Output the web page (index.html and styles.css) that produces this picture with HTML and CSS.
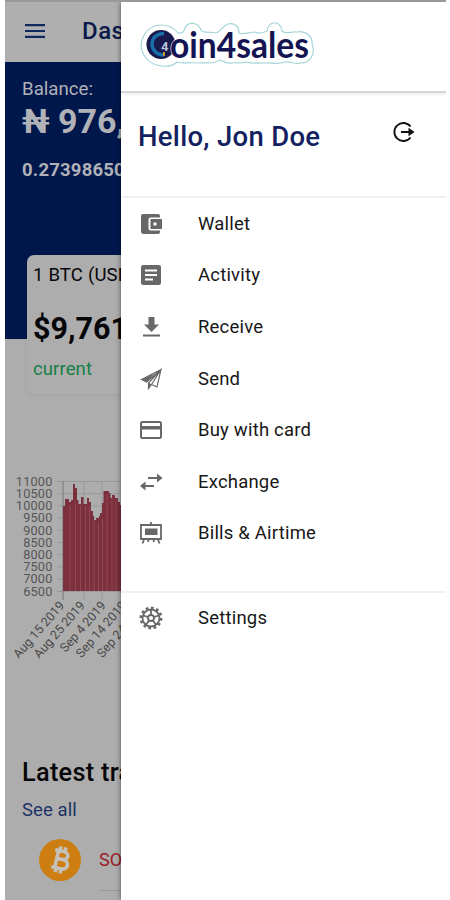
FILE: index.html
```
<!DOCTYPE html>
<html lang="en">
<head>
<meta charset="utf-8">
<title>Coin4sales</title>
<link rel="stylesheet" href="styles.css">
</head>
<body>
<div class="phone">
  <main class="dashboard">
    <header class="topbar">
      <svg class="burger" viewBox="0 0 20 14"><path d="M0 1.1h20M0 7h20M0 12.9h20"/></svg>
      <h1>Dashboard</h1>
    </header>
    <section class="hero">
      <p class="label">Balance:</p>
      <p class="amount">₦ 976,</p>
      <p class="btc">0.27398650</p>
    </section>
    <section class="rate">
      <p class="pair">1 BTC (USD)</p>
      <p class="price">$9,761</p>
      <p class="now">current</p>
    </section>
    <svg class="chart" viewBox="0 0 130 210">
      <path class="grid" d="M52 11.5h78M52 23.7h78M52 35.9h78M52 48.1h78M52 60.3h78M52 72.5h78M52 84.7h78M52 96.9h78M52 109.1h78M52 121.5h78M79 11v119M97 11v119M117 11v119"/>
      <path class="axis" d="M58 11v119"/>
      <path class="bars" d="M58 121V36H60V29H64V32H66V30H68V14H70V18H72V30H73.500V34H76V27H78.500V34H82V28H84V32H86V41H88V46H89V50H91V48H94V46H95V43H97V33H98.500V21H104V23H105.500V28H107V25H110V28H113V32H115V35H118V121Z"/>
      <path class="gaps" d="M65 35v86M70.500 32v89M75.500 35v86M80.500 36v85M84.500 36v85M89 50v71M93.500 53v68M97.500 48v73M102 24v97M107 29v92M111 29v92"/>
      <g class="ylab">
        <text x="47.500" y="15.700">11000</text><text x="47.500" y="27.900">10500</text>
        <text x="47.500" y="40.100">10000</text><text x="47.500" y="52.300">9500</text>
        <text x="47.500" y="64.500">9000</text><text x="47.500" y="76.700">8500</text>
        <text x="47.500" y="88.900">8000</text><text x="47.500" y="101.100">7500</text>
        <text x="47.500" y="113.300">7000</text><text x="47.500" y="125.500">6500</text>
      </g>
      <g class="xlab">
        <text transform="translate(60 136) rotate(-49)">Aug 15 2019</text>
        <text transform="translate(80.500 136) rotate(-49)">Aug 25 2019</text>
        <text transform="translate(101.500 136) rotate(-49)">Sep 4 2019</text>
        <text transform="translate(122 136) rotate(-49)">Sep 14 2019</text>
        <text transform="translate(143 136) rotate(-49)">Sep 24 2019</text>
      </g>
    </svg>
    <section class="latest">
      <h2>Latest transactions</h2>
      <a class="all">See all</a>
      <div class="tx">
        <svg class="coin" viewBox="0 0 42 42"><circle cx="21" cy="21" r="21"/><g transform="rotate(13 21 21)"><path d="M14 12h8.500c7 0 7 8 0 8H17m0 0h6.500c8 0 8 9.500 0 9.500H14M17.500 12v17.500M19 7.500V12M24 7.500V12M19 29.500V34M24 29.500V34"/></g></svg>
        <span class="code">SOLD</span>
      </div>
    </section>
  </main>

  <aside class="drawer">
    <div class="brand">
      <svg class="logo" viewBox="0 0 176 50">
        <path class="sticker" d="M20 5C28 5 33 8 37 13C42 14 43 11 44 8C47 1 57 2 60 10C62 14 70 11 75 13C80 12 81 6 87 4C94 2 98 7 98 13C104 15 108 12 114 12C119 15 123 12 126 11C127 0 140 0 141 11C145 15 150 11 156 12C164 10 172 16 171 24C175 34 169 43 160 43C154 45 150 41 144 42C137 45 129 42 123 43C115 43 111 44 105 42C98 44 94 42 91 43C84 44 81 40 78 40C74 45 63 42 58 43C47 42 43 44 36 42C29 49 12 47 5 38C-6 24 4 5 20 5Z"/>
        <circle class="disc" cx="20" cy="24.500" r="14.500"/>
        <path class="cee" d="M23 13.500c-16 0-16 21 0 21.500"/>
        <text class="four" x="20" y="30.500">4</text>
        <path class="spark" d="M23 32v4"/>
        <text class="word" x="29" y="38" textLength="139" lengthAdjust="spacingAndGlyphs">oin4sales</text>
      </svg>
    </div>
    <div class="greeting">
      <h2>Hello, Jon Doe</h2>
      <svg class="logout" viewBox="0 0 24 24"><path d="M18.500 6.500A9 9 0 1 0 18.500 17.500M9 12h8"/><path class="fill" d="M16.500 7.800 22.500 12l-6 4.200z"/></svg>
    </div>
    <nav class="menu">
      <a><svg viewBox="0 0 24 24"><path d="M21 18.500V20a2 2 0 0 1-2 2H4a2.500 2.500 0 0 1-2-2V4a2 2 0 0 1 2-2h15a2 2 0 0 1 2 2v1.500h-9.500a2 2 0 0 0-2 2v9a2 2 0 0 0 2 2zM11.500 17H23V7H11.500zm4.500-3.300a1.700 1.700 0 1 1 0-3.400 1.700 1.700 0 0 1 0 3.400z"/></svg><span>Wallet</span></a>
      <a><svg viewBox="0 0 24 24"><path d="M20 2H4a2 2 0 0 0-2 2v16a2 2 0 0 0 2 2h16a2 2 0 0 0 2-2V4a2 2 0 0 0-2-2zm-6 15.500H6v-2h8zm4-4.500H6v-2h12zm0-4.500H6v-2h12z"/></svg><span>Activity</span></a>
      <a><svg viewBox="0 0 24 24"><path d="M20 9.500h-4.500V2h-6v7.500H5l7.500 7.500zM4 19.500v2h17v-2z"/></svg><span>Receive</span></a>
      <a><svg viewBox="0 0 24 24"><path class="line" d="M22 2.500 2.500 12.500 7.500 15 22 2.500 18 20l-5.500-2.500M22 2.500 9.500 16v5.500l3-4M22 2.500 12.500 17.500"/><path d="M3 12.500 16 6 8 15zM9.500 15.500l3 2-3 4z"/></svg><span>Send</span></a>
      <a><svg viewBox="0 0 24 24"><path d="M20.500 3h-17A2.500 2.500 0 0 0 1 5.500v13A2.500 2.500 0 0 0 3.500 21h17a2.500 2.500 0 0 0 2.500-2.500v-13A2.500 2.500 0 0 0 20.500 3zm.5 16H3v-7.500h18zm0-11H3V5h18z"/></svg><span>Buy with card</span></a>
      <a><svg viewBox="0 0 24 24"><path class="line thick" d="M9 8h11M4 16h11"/><path d="M18 3.500 23.500 8 18 12.500zM6.500 11.500 1 16l5.500 4.500z"/></svg><span>Exchange</span></a>
      <a><svg viewBox="0 0 24 24"><path class="line thick" d="M2 4h20v14H2zM12 1v3M5 18.500l-1.500 4M19 18.500l1.500 4M9.500 18.500 9 21M14.500 18.500l.5 2.500"/><path d="M6 7.500h12.500v6.500H6z"/></svg><span>Bills &amp; Airtime</span></a>
    </nav>
    <nav class="menu extra">
      <a><svg viewBox="0 0 24 24"><circle class="line thick" cx="12" cy="12" r="8.500"/><circle class="line teeth" cx="12" cy="12" r="10.200" pathLength="48"/><circle class="line thick" cx="12" cy="12" r="3"/><path class="line thick" d="M12 9V4M14.900 11.100l4.700-1.600M13.800 14.400l3 4.100M10.200 14.400l-3 4.100M9.100 11.100 4.400 9.500"/></svg><span>Settings</span></a>
    </nav>
  </aside>
</div>
</body>
</html>
```
FILE: styles.css
```
* { box-sizing: border-box; }
body { margin: 0; background: #fff; font-family: Roboto, "Noto Sans", sans-serif; }
h1, h2, p { margin: 0; white-space: nowrap; }
svg { display: block; flex: none; }
.phone { position: relative; width: 441px; height: 900px; margin-left: 5px; overflow: hidden; border-top: 2px solid #999; }

.dashboard { width: 116px; height: 898px; overflow: hidden; background: #adadad; color: #060608; }
.topbar { display: flex; align-items: center; height: 60px; padding: 0 0 2px 20px; gap: 37px; background: #afafaf; }
.burger { width: 20px; height: 14px; stroke: #11285e; stroke-width: 2.100; fill: none; }
.topbar h1 { font-size: 24px; line-height: 28px; font-weight: 500; letter-spacing: .5px; color: #0c1a4a; }
.hero { height: 277px; padding: 16px 0 0 17px; background: #00174c; color: #b0b2b8; }
.label { font-size: 18.700px; line-height: 22px; }
.amount { margin-top: 2px; font-size: 34px; line-height: 38px; font-weight: 700; }
.btc { margin-top: 19px; font-size: 18.500px; line-height: 22px; font-weight: 700; letter-spacing: .2px; }
.rate { height: 139px; margin: -84px 0 0 22px; padding: 9px 0 0 6px; width: 150px; border-radius: 7px; background: #adadad; box-shadow: 0 1px 4px #00000012; }
.pair { font-size: 18.500px; line-height: 22px; letter-spacing: .2px; }
.price { margin-top: 25px; font-size: 30.500px; line-height: 36px; font-weight: 700; }
.now { margin-top: 11px; font-size: 18.500px; line-height: 22px; color: #168047; letter-spacing: .1px; }
.chart { width: 130px; height: 210px; margin-top: 76px; font-size: 12.700px; }
.grid { stroke: #999; stroke-width: 1; fill: none; }
.axis { stroke: #777; stroke-width: 1; }
.bars { fill: #7c303d; }
.gaps { stroke: #9b5964; stroke-width: .6; }
.ylab text { text-anchor: end; fill: #565656; letter-spacing: .2px; }
.xlab text { text-anchor: end; fill: #494949; font-size: 12.500px; }
.latest { padding: 77px 0 0 17px; }
.latest h2 { font-size: 25.300px; line-height: 32px; font-weight: 500; letter-spacing: .3px; }
.all { display: block; margin-top: 10px; font-size: 18.500px; line-height: 22px; color: #1d3365; letter-spacing: .1px; }
.tx { display: flex; align-items: center; gap: 18px; height: 48px; margin: 15px 0 0 17px; }
.coin { width: 42px; height: 42px; fill: #cd7e12; }
.coin path { fill: none; stroke: #c4c0ba; stroke-width: 3.600; }
.code { height: 61px; padding-top: 19px; width: 100px; border-bottom: 1px solid #999; font-size: 18px; line-height: 22px; color: #991c28; }

.drawer { position: absolute; top: 0; left: 116px; width: 325px; height: 898px; background: #fff; box-shadow: 0 0 5px #0008; }
.brand { height: 91px; padding: 18px 0 0 20px; border-bottom: 2px solid #d6d6d6; box-shadow: 0 2px 3px #0001; }
.logo { width: 176px; height: 50px; overflow: visible; }
.sticker { fill: #fff; stroke: #a5d5d7; stroke-width: 1.200; }
.word { font-family: Lato, sans-serif; font-size: 37px; font-weight: 700; fill: #151452; stroke: #fff; stroke-width: 1.200; paint-order: stroke; }
.disc { fill: #19194d; }
.cee { fill: none; stroke: #176fa8; stroke-width: 3.500; }
.four { font-size: 13px; font-weight: 700; fill: #b9c5da; }
.spark { stroke: #c79233; stroke-width: 2; }
.greeting { display: flex; justify-content: space-between; height: 105px; padding: 26px 30px 0 16px; border-bottom: 2px solid #f0f0f0; margin-left: 1px; }
.greeting h2 { font-size: 27.500px; line-height: 36px; font-weight: 500; letter-spacing: .3px; color: #13225f; }
.logout { width: 24px; height: 24px; margin-top: 1px; fill: none; stroke: #111; stroke-width: 1.900; }
.logout .fill { fill: #111; stroke: none; }
.menu { padding-left: 18px; height: 393px; }
.menu a { display: flex; align-items: center; gap: 35px; height: 51.600px; font-size: 18.500px; letter-spacing: .2px; color: #171717; white-space: nowrap; }
.menu svg { width: 24px; height: 24px; fill: #686868; }
.menu .line { fill: none; stroke: #686868; stroke-width: 1.200; }
.menu .thick { stroke-width: 1.800; }
.menu .teeth { stroke-width: 2.500; stroke-dasharray: 2 2; }
.extra { border-top: 2px solid #f0f0f0; height: 60px; }
.extra a { height: 49px; }
```
